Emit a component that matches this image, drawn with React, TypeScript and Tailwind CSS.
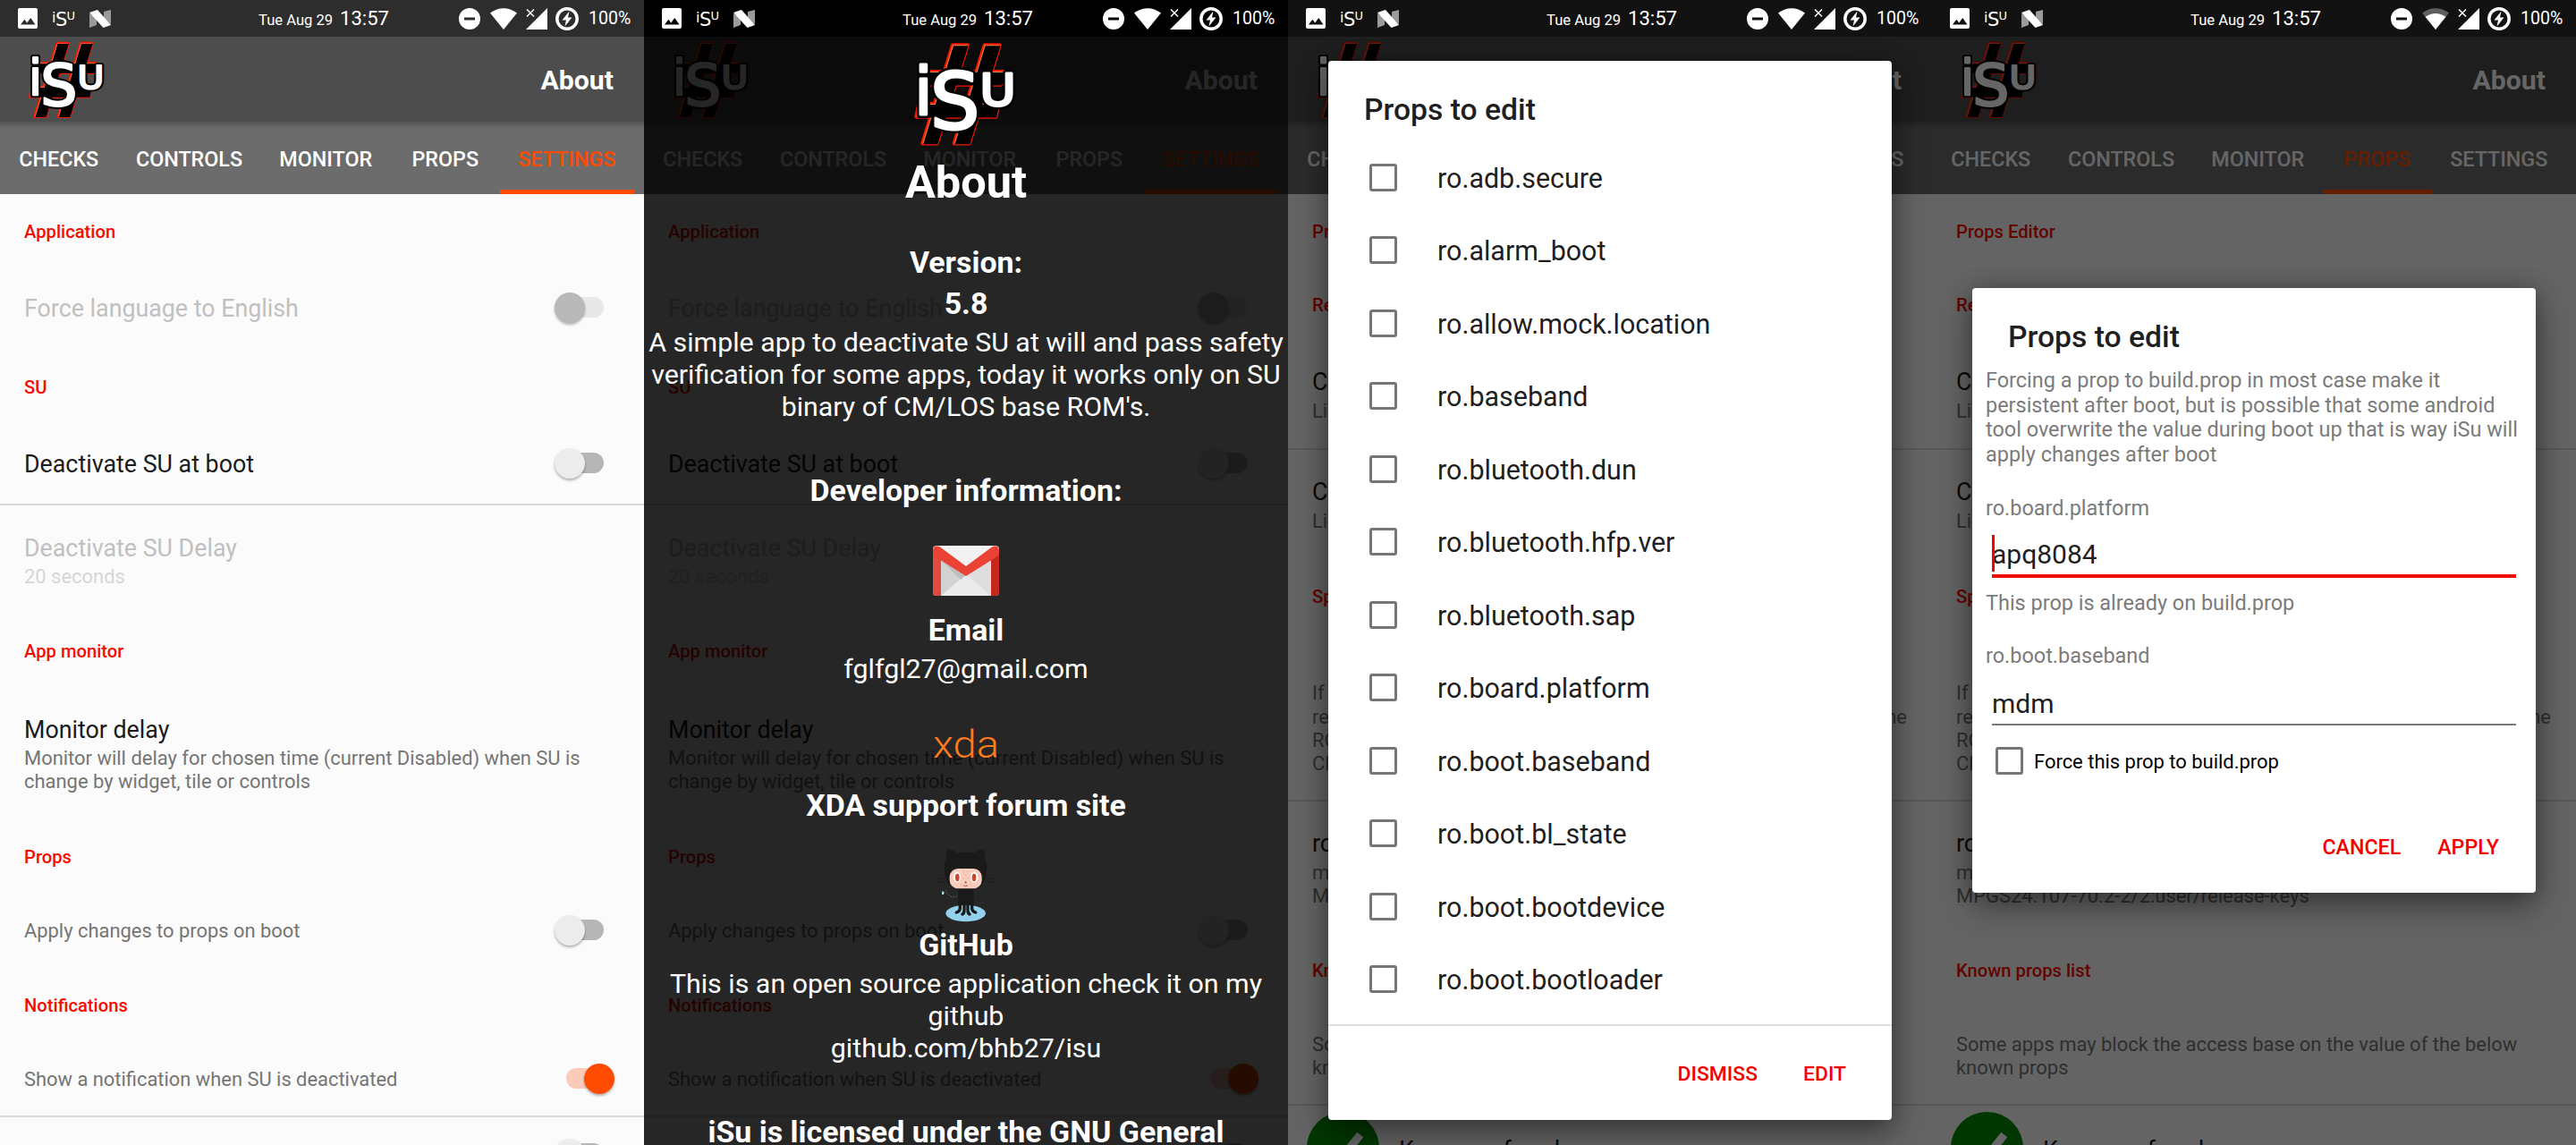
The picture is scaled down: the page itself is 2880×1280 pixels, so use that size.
import type { ReactNode } from "react";

const TABS = [
  { label: "CHECKS", width: "w-[131.5px]" },
  { label: "CONTROLS", width: "w-[160px]" },
  { label: "MONITOR", width: "w-[145.5px]" },
  { label: "PROPS", width: "w-[121.5px]" },
  { label: "SETTINGS", width: "w-[150.5px]" },
];

const PROPS = [
  "ro.adb.secure",
  "ro.alarm_boot",
  "ro.allow.mock.location",
  "ro.baseband",
  "ro.bluetooth.dun",
  "ro.bluetooth.hfp.ver",
  "ro.bluetooth.sap",
  "ro.board.platform",
  "ro.boot.baseband",
  "ro.boot.bl_state",
  "ro.boot.bootdevice",
  "ro.boot.bootloader",
];

function HashShape({ fill, stroke }: { fill: string; stroke?: string }) {
  return (
    <g fill={fill} stroke={stroke} strokeWidth={stroke ? 13 : 0} strokeLinejoin="round">
      <polygon points="166,28 216,28 113,361 64,361" />
      <polygon points="274,28 325,28 222,361 171,361" />
      <polygon points="84,118 344,118 330,162 70,162" />
      <polygon points="52,227 320,227 312,271 43,271" />
    </g>
  );
}

function LogoLetters({ fill, strokeWidth }: { fill: string; strokeWidth: number }) {
  return (
    <g fill={fill} stroke={fill} strokeWidth={strokeWidth} strokeLinejoin="round" fontFamily="DejaVu Sans, sans-serif">
      <text x="36" y="263" fontSize="221">i</text>
      <text x="90" y="310" fontSize="264">S</text>
      <text transform="translate(258 232) scale(1.12 1)" fontSize="148">U</text>
    </g>
  );
}

function Logo({ className }: { className: string }) {
  return (
    <svg viewBox="36 18 350 354" className={className}>
      <HashShape fill="#ff0000" stroke="#ff1500" />
      <HashShape fill="#e08a4a" />
      <g transform="translate(2.500 2.500)">
        <HashShape fill="#000" />
      </g>
      <LogoLetters fill="#000" strokeWidth={25} />
      <LogoLetters fill="#fff" strokeWidth={9} />
    </svg>
  );
}

function StatusBar({ bg, dimWifi = false }: { bg: string; dimWifi?: boolean }) {
  return (
    <div className={`relative z-20 flex h-[41px] items-center text-white ${bg}`}>
      <svg viewBox="0 0 22 23" className="ml-[20px] h-[23px] w-[22px]">
        <path fillRule="evenodd" fill="#fff" d="M2 0h18a2 2 0 0 1 2 2v19a2 2 0 0 1-2 2H2a2 2 0 0 1-2-2V2a2 2 0 0 1 2-2ZM3 18.500h16.500l-5.300-7.500-4 5.400-2.800-3.600Z" />
      </svg>
      <svg viewBox="0 0 26 22" className="ml-[17px] h-[22px] w-[26px] overflow-visible" fill="#fff" fontFamily="DejaVu Sans, sans-serif">
        <text x="-1" y="15" fontSize="16">i</text>
        <text x="3" y="19" fontSize="21">S</text>
        <text x="15.500" y="12" fontSize="13">U</text>
      </svg>
      <svg viewBox="0 0 24 20" className="ml-[15px] h-[20px] w-[24px]">
        <path d="M0 4 8 9v8L0 20Z" fill="#9a9a9a" />
        <path d="M24 0v16l-8-5V2Z" fill="#9a9a9a" />
        <path d="M0 3 9 0l15 17-8.500 3Z" fill="#fff" />
      </svg>
      <div className="ml-[165px] flex w-[146px] items-baseline justify-between whitespace-nowrap pt-[2px]">
        <span className="text-[16.600px]">Tue Aug 29</span>
        <span className="text-[22.100px] leading-[26px]">13:57</span>
      </div>
      <svg viewBox="0 0 24 24" className="ml-[78px] h-[24px] w-[24px]">
        <path fillRule="evenodd" fill="#fff" d="M12 0a12 12 0 1 1 0 24 12 12 0 0 1 0-24ZM6 10.500v3h12v-3Z" />
      </svg>
      <svg viewBox="0 0 30 24" className="ml-[11px] h-[24px] w-[30px]">
        {dimWifi ? (
          <>
            <path d="M0 5.500Q15-5 30 5.500L15 24Z" fill="#5f5f5f" />
            <path d="M3.500 9.800Q15 2 26.500 9.800L15 24Z" fill="#fff" />
          </>
        ) : (
          <path d="M0 5.500Q15-5 30 5.500L15 24Z" fill="#fff" />
        )}
      </svg>
      <svg viewBox="0 0 24 24" className="ml-[10px] h-[24px] w-[24px]">
        <path d="M24 0v24H0Z" fill="#fff" />
        <path d="M1 1.500l8 8M9 1.500l-8 8" stroke="#fff" strokeWidth="1.500" />
      </svg>
      <svg viewBox="0 0 26 26" className="ml-[9px] h-[26px] w-[26px]">
        <circle cx="13" cy="13" r="11.200" fill="none" stroke="#fff" strokeWidth="3.500" />
        <path d="M15.500 4.500 7.500 14.500h4.500L10.500 21.500 18.500 11.500h-4.500Z" fill="#fff" />
      </svg>
      <span className="ml-[11px] pt-px text-[19.600px]">100%</span>
    </div>
  );
}

function Header({ active }: { active: string }) {
  return (
    <>
      <div className="flex h-[95px] items-center justify-between bg-[#4d4d4d] pl-[32px] pr-[34px]">
        <Logo className="mt-[1px] h-[87px] w-[86px]" />
        <span className="mt-[3px] text-[30.200px] font-bold leading-[36px] text-white">About</span>
      </div>
      <div className="flex h-[81px] bg-[#6c6c6c] bg-linear-to-b from-[#565656] from-0% to-[#6c6c6c] to-[8px] pr-[11px]">
        {TABS.map((t) => (
          <div
            key={t.label}
            className={`flex shrink-0 items-center justify-center border-b-[5px] pt-[8px] text-[23.300px] font-medium ${t.width} ${
              t.label === active ? "border-[#ff4b00] text-[#ff4b00]" : "border-transparent text-white"
            }`}
          >
            {t.label}
          </div>
        ))}
      </div>
    </>
  );
}

function Category({ className, children }: { className: string; children: ReactNode }) {
  return <div className={`text-[20.200px] font-medium leading-[24px] text-[#f40c00] ${className}`}>{children}</div>;
}

function Title({ className, children }: { className: string; children: ReactNode }) {
  return <div className={`text-[26.800px] leading-[32px] ${className}`}>{children}</div>;
}

function Summary({ className, children }: { className: string; children: ReactNode }) {
  return <div className={`whitespace-nowrap text-[21.950px] leading-[26.200px] ${className}`}>{children}</div>;
}

function Divider({ className }: { className: string }) {
  return <div className={`-mx-[28px] h-[2px] bg-[#dadada] ${className}`} />;
}

function Switch({ state }: { state: "on" | "off" | "disabled" }) {
  const track = { on: "bg-[#fbcbb9]", off: "bg-[#b6b6b6]", disabled: "bg-[#e8e8e8]" }[state];
  const thumb = {
    on: "left-[33px] bg-[#ff4b00]",
    off: "left-0 bg-[#ececec]",
    disabled: "left-0 bg-[#b9b9b9]",
  }[state];
  return (
    <div className="relative h-[36px] w-[67px] shrink-0">
      <div className={`absolute left-[13px] top-[5px] h-[23px] w-[42px] rounded-full ${track}`} />
      <div className={`absolute top-0 size-[34px] rounded-full shadow-[0_2px_3px_rgba(0,0,0,0.3)] ${thumb}`} />
    </div>
  );
}

function Row({ className, state, children }: { className: string; state: "on" | "off" | "disabled"; children: ReactNode }) {
  return (
    <div className={`flex h-[36px] items-center justify-between pr-[33px] ${className}`}>
      <span className="mt-[1px] whitespace-nowrap">{children}</span>
      <Switch state={state} />
    </div>
  );
}

function SettingsPage() {
  return (
    <div className="h-[1063px] overflow-hidden bg-[#fbfbfb] pl-[27px] text-[#1b1b1b]">
      <Category className="mt-[30px]">Application</Category>
      <Row className="mt-[56px] text-[26.800px] text-[#c0c0c0]" state="disabled">Force language to English</Row>
      <Category className="mt-[58px]">SU</Category>
      <Row className="mt-[56px] text-[26.800px]" state="off">Deactivate SU at boot</Row>
      <Divider className="mt-[26px]" />
      <Title className="mt-[32px] text-[#c0c0c0]">Deactivate SU Delay</Title>
      <Summary className="mt-[3px] text-[#d6d6d6]">20 seconds</Summary>
      <Category className="mt-[58px]">App monitor</Category>
      <Title className="mt-[60px]">Monitor delay</Title>
      <Summary className="mt-[3px] text-[#757575]">
        Monitor will delay for chosen time (current Disabled) when SU is
        <br />
        change by widget, tile or controls
      </Summary>
      <Category className="mt-[58px]">Props</Category>
      <Row className="mt-[53px] text-[21.900px] text-[#757575]" state="off">Apply changes to props on boot</Row>
      <Category className="mt-[53px]">Notifications</Category>
      <Row className="mt-[53px] text-[21.900px] text-[#757575]" state="on">Show a notification when SU is deactivated</Row>
      <Divider className="mt-[22px]" />
      <Row className="mt-[24px]" state="off">{""}</Row>
    </div>
  );
}

function PropsPage() {
  return (
    <div className="h-[1063px] overflow-hidden bg-[#fbfbfb] pl-[27px] pr-[28px] text-[#1b1b1b]">
      <Category className="mt-[30px]">Props Editor</Category>
      <Category className="mt-[58px]">Re</Category>
      <Title className="mt-[58px]">C</Title>
      <Summary className="mt-[4px] text-[#757575]">Li</Summary>
      <Divider className="mt-[28px]" />
      <Title className="mt-[31px]">C</Title>
      <Summary className="mt-[4px] text-[#757575]">Li</Summary>
      <Category className="mt-[59px]">Sp</Category>
      <Summary className="mt-[83px] text-[#757575]">
        If
        <br />
        <span className="flex justify-between">
          <span>re</span>
          <span>he</span>
        </span>
        RO
        <br />
        Ch
      </Summary>
      <Divider className="mt-[27px]" />
      <Title className="mt-[31px]">ro</Title>
      <Summary className="mt-[4px] text-[#757575]">
        m
        <br />
        MPGS24.107-70.2-2/2:user/release-keys
      </Summary>
      <Category className="mt-[57px]">Known props list</Category>
      <Summary className="mt-[58px] text-[#757575]">
        Some apps may block the access base on the value of the below
        <br />
        known props
      </Summary>
      <Divider className="mt-[27px]" />
      <div className="-ml-[6px] mt-[7px] flex items-center gap-[22px]">
        <svg viewBox="0 0 81 81" className="size-[81px] shrink-0">
          <circle cx="40.500" cy="40.500" r="40.500" fill="#008a00" />
          <path d="M22 44 34 58 57 29" fill="none" stroke="#fff" strokeWidth="9" strokeLinecap="square" />
        </svg>
        <Title className="mt-[5px]">Known safe value</Title>
      </div>
    </div>
  );
}

function Scrim({ className }: { className: string }) {
  return <div className={`absolute inset-0 z-10 ${className}`} />;
}

function Screen({ children }: { children: ReactNode }) {
  return <section className="relative h-[1280px] w-[720px] shrink-0 overflow-hidden">{children}</section>;
}

function GmailIcon() {
  return (
    <svg viewBox="0 0 74 56" className="mt-[41px] h-[56px] w-[74px] shrink-0">
      <rect width="74" height="56" rx="4" fill="#dedede" />
      <path d="M9 10v46h20L37 34Z" fill="#d2d2d2" />
      <path d="M9 56 37 32 65 56Z" fill="#ebebeb" />
      <path d="M37 33 9 12v4l22 22Z" fill="#bdbdbd" />
      <path d="M4 0h66L37 23Z" fill="#f2f2f2" />
      <path d="M0 6v46a4 4 0 0 0 4 4h5V14Z" fill="#e04a3f" />
      <path d="M74 6v46a4 4 0 0 1-4 4h-5V14Z" fill="#c5281c" />
      <path d="M0 5C0 1 4-1 8 1.500L37 23 66 1.500C70-1 74 1 74 5v3c0 2-1 3-2 4L37 34 2 12C1 11 0 10 0 8Z" fill="#ea4335" />
    </svg>
  );
}

function Octocat() {
  return (
    <svg viewBox="0 0 300 300" className="mt-[19px] size-[100px] shrink-0">
      <ellipse cx="149" cy="243" rx="67" ry="28" fill="#92d0ec" />
      <path d="M82 165Q92 190 108 188T124 184" fill="none" stroke="#7a7a7a" strokeWidth="3" strokeDasharray="4 5" />
      <path d="M70 168l7 4-2 9-6-2Z" fill="#b5dcec" />
      <path d="M88 27Q104 28 120 40Q150 36 178 40Q194 28 210 27Q216 46 213 60Q222 78 219 104Q217 150 176 160H122Q80 150 78 104Q75 78 85 60Q82 44 88 27Z" fill="#1a1a1a" />
      <path d="M124 155h52v60h-52Z" fill="#1a1a1a" />
      <g fill="none" stroke="#1a1a1a" strokeWidth="10" strokeLinecap="round">
        <path d="M130 205v20q0 12-12 15" />
        <path d="M144 205v28q0 10-6 13" />
        <path d="M156 205v28q0 10 6 13" />
        <path d="M170 205v20q0 12 12 15" />
      </g>
      <path d="M78 128 42 124M78 136 46 141M220 128l40-4M220 136l36 5" stroke="#1e1e1e" strokeWidth="3" />
      <rect x="95" y="93" width="108" height="67" rx="28" fill="#f8cdbd" />
      <ellipse cx="120" cy="122" rx="12" ry="17.500" fill="#fff" />
      <ellipse cx="178" cy="122" rx="12" ry="17.500" fill="#fff" />
      <ellipse cx="121" cy="123" rx="7" ry="12.500" fill="#c4492f" />
      <ellipse cx="177" cy="123" rx="7" ry="12.500" fill="#c4492f" />
      <g fill="#e79b83">
        <circle cx="142" cy="104" r="2" />
        <circle cx="156" cy="104" r="2" />
        <circle cx="149" cy="114" r="2" />
        <circle cx="142" cy="126" r="2" />
        <circle cx="158" cy="124" r="2" />
        <circle cx="134" cy="146" r="2" />
        <circle cx="166" cy="146" r="2" />
      </g>
      <ellipse cx="149" cy="139" rx="3" ry="4" fill="#b5604b" />
      <path d="M141 149q8 7 15 0" fill="none" stroke="#b5604b" strokeWidth="3" />
    </svg>
  );
}

function AboutOverlay() {
  const heading = "text-[33.900px] font-bold leading-[40px]";
  const body = "text-[30.350px] leading-[36px]";
  return (
    <div className="absolute inset-0 z-10 flex flex-col items-center whitespace-nowrap pt-[47px] text-center text-white">
      <Logo className="h-[117px] w-[116px] shrink-0" />
      <h1 className="mt-[12px] text-[50.500px] font-bold leading-[56px]">About</h1>
      <h2 className={`mt-[42px] ${heading}`}>Version:</h2>
      <p className={`mt-[6px] ${heading}`}>5.8</p>
      <p className={`mt-[5px] ${body}`}>
        A simple app to deactivate SU at will and pass safety
        <br />
        verification for some apps, today it works only on SU
        <br />
        binary of CM/LOS base ROM&apos;s.
      </p>
      <h2 className={`mt-[56px] ${heading}`}>Developer information:</h2>
      <GmailIcon />
      <h2 className={`mt-[19px] ${heading}`}>Email</h2>
      <p className={`mt-[5px] ${body}`}>fglfgl27@gmail.com</p>
      <svg viewBox="0 0 74 32" className="mt-[49px] h-[32px] w-[74px] shrink-0 overflow-visible">
        <text x="0" y="32" fontFamily="Roboto, sans-serif" fontWeight="300" fontSize="42" textLength="74" lengthAdjust="spacingAndGlyphs" fill="#ff7a1a">
          xda
        </text>
      </svg>
      <h2 className={`mt-[34px] ${heading}`}>XDA support forum site</h2>
      <Octocat />
      <h2 className={`-mt-[3px] ${heading}`}>GitHub</h2>
      <p className={`mt-[5px] ${body}`}>
        This is an open source application check it on my
        <br />
        github
        <br />
        github.com/bhb27/isu
      </p>
      <h2 className={`mt-[56px] ${heading}`}>iSu is licensed under the GNU General</h2>
    </div>
  );
}

function Checkbox() {
  return <span className="size-[31px] shrink-0 rounded-[3px] border-[3px] border-[#767676]" />;
}

const DIALOG =
  "absolute left-[45px] z-10 w-[630px] rounded-[4px] bg-white text-[#1f1f1f] shadow-[0_16px_36px_rgba(0,0,0,0.38),0_0_24px_rgba(0,0,0,0.22)]";

function PropListDialog() {
  return (
    <div className={`top-[68px] h-[1184px] ${DIALOG}`}>
      <h2 className="pl-[40px] pt-[35px] text-[33.700px] font-medium leading-[40px]">Props to edit</h2>
      <ul className="mt-[16px]">
        {PROPS.map((p) => (
          <li key={p} className="flex h-[81.500px] items-center gap-[45px] pl-[46px] text-[30.450px]">
            <span className="-mt-[3px] flex">
              <Checkbox />
            </span>
            {p}
          </li>
        ))}
      </ul>
      <div className="mt-[8px] flex justify-end gap-[51px] border-t-2 border-[#dfdfdf] pr-[51px] pt-[40px] text-[22.900px] font-medium leading-[28px] text-[#f40000]">
        <span>DISMISS</span>
        <span>EDIT</span>
      </div>
    </div>
  );
}

function PropValueDialog() {
  const label = "text-[23.450px] leading-[27.500px] text-[#7b7b7b]";
  return (
    <div className={`top-[322px] h-[676px] whitespace-nowrap pl-[15px] ${DIALOG}`}>
      <h2 className="pl-[25px] pt-[35px] text-[33.700px] font-medium leading-[40px]">Props to edit</h2>
      <p className={`mt-[15px] ${label}`}>
        Forcing a prop to build.prop in most case make it
        <br />
        persistent after boot, but is possible that some android
        <br />
        tool overwrite the value during boot up that is way iSu will
        <br />
        apply changes after boot
      </p>
      <p className={`mt-[33px] ${label}`}>ro.board.platform</p>
      <div className="relative ml-[7px] mr-[22px] mt-[17px] border-b-4 border-[#ee0d09] pb-[2px] text-[30px] leading-[40px]">
        <span className="absolute -top-[2px] left-0 h-[41px] w-[3px] bg-[#f40000]" />
        apq8084
      </div>
      <p className={`mt-[15px] ${label}`}>This prop is already on build.prop</p>
      <p className={`mt-[32px] ${label}`}>ro.boot.baseband</p>
      <div className="ml-[7px] mr-[22px] mt-[19px] border-b-2 border-[#7b7b7b] pb-[2px] text-[30px] leading-[40px]">mdm</div>
      <div className="ml-[11px] mt-[24px] flex h-[31px] items-center gap-[12px] text-[21.950px] text-black">
        <Checkbox />
        <span className="mt-[4px]">Force this prop to build.prop</span>
      </div>
      <div className="mt-[67px] flex justify-end gap-[41px] pr-[41px] text-[23.200px] font-medium leading-[28px] text-[#f40000]">
        <span>CANCEL</span>
        <span>APPLY</span>
      </div>
    </div>
  );
}

export default function App() {
  return (
    <main className="flex h-[1280px] w-[2880px] overflow-hidden bg-black font-[Roboto,sans-serif]">
      <Screen>
        <StatusBar bg="bg-[#2d2d2d]" />
        <Header active="SETTINGS" />
        <SettingsPage />
      </Screen>
      <Screen>
        <StatusBar bg="bg-black" />
        <Header active="SETTINGS" />
        <SettingsPage />
        <Scrim className="bg-black/85" />
        <AboutOverlay />
      </Screen>
      <Screen>
        <StatusBar bg="bg-[#121212]" />
        <Header active="PROPS" />
        <PropsPage />
        <Scrim className="bg-black/60" />
        <PropListDialog />
      </Screen>
      <Screen>
        <StatusBar bg="bg-[#121212]" dimWifi />
        <Header active="PROPS" />
        <PropsPage />
        <Scrim className="bg-black/60" />
        <PropValueDialog />
      </Screen>
    </main>
  );
}
